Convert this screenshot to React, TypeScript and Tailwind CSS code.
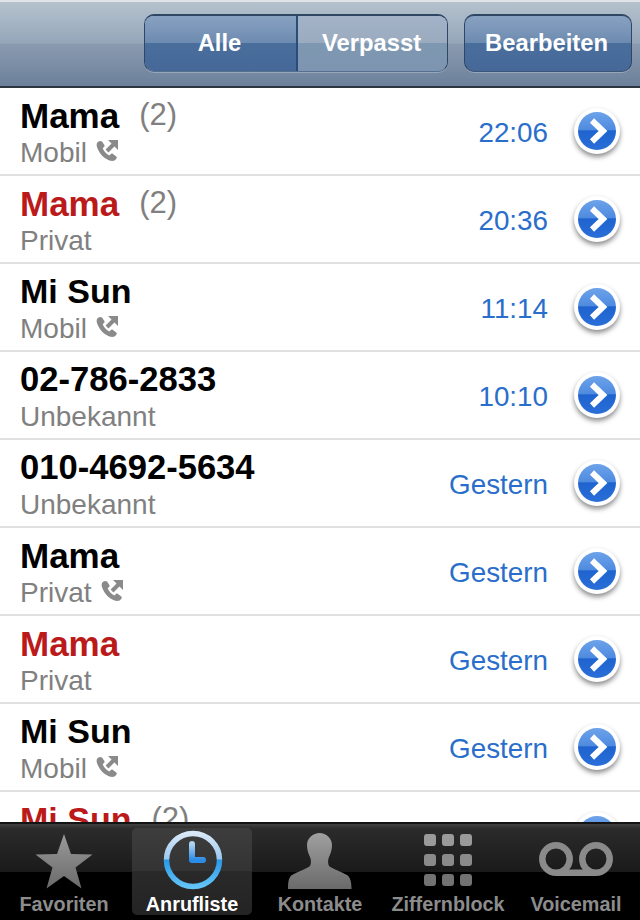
import React from "react";

type Row = { name: string; count?: string; missed?: boolean; sub: string; phone?: boolean; time: string };

const rows: Row[] = [
  { name: "Mama", count: "(2)", sub: "Mobil", phone: true, time: "22:06" },
  { name: "Mama", count: "(2)", missed: true, sub: "Privat", time: "20:36" },
  { name: "Mi Sun", sub: "Mobil", phone: true, time: "11:14" },
  { name: "02-786-2833", sub: "Unbekannt", time: "10:10" },
  { name: "010-4692-5634", sub: "Unbekannt", time: "Gestern" },
  { name: "Mama", sub: "Privat", phone: true, time: "Gestern" },
  { name: "Mama", missed: true, sub: "Privat", time: "Gestern" },
  { name: "Mi Sun", sub: "Mobil", phone: true, time: "Gestern" },
  { name: "Mi Sun", count: "(2)", missed: true, sub: "Mobil", time: "Gestern" },
];

function OutgoingIcon() {
  return (
    <svg width="24" height="24" viewBox="0 0 24 24" className="ml-[8px] mt-[-4px]">
      <path
        d="M3.5 2.5 C1.5 3.5 1 6 2.5 9.5 C4.5 14.5 9 19.5 14.5 21.5 C17.5 22.5 20 22 21.5 19.5 C22 18.5 21.8 17.8 21 17.2 L18 15 C17 14.4 16.3 14.5 15.6 15.3 L14.5 16.5 C11.5 15.2 8.8 12.3 7.7 9.2 L9 8 C9.7 7.3 9.8 6.6 9.2 5.7 L7.2 2.8 C6.2 1.7 5 1.7 3.5 2.5 Z"
        fill="#8a8a8a"
      />
      <path d="M12 12 L19.5 4.5" stroke="#8a8a8a" strokeWidth="4" fill="none" />
      <path d="M13 1 H23 V11 Z" fill="#8a8a8a" />
    </svg>
  );
}

function Disclosure() {
  return (
    <div className="h-[46px] w-[46px] shrink-0 rounded-full bg-white p-[4px] shadow-[0_3px_5px_rgba(0,0,0,0.45)]">
      <div className="flex h-full w-full items-center justify-center rounded-full bg-[linear-gradient(180deg,#6ea3ea_0%,#4f8be0_46%,#1f63cf_50%,#2a6fd8_100%)]">
        <svg width="38" height="38" viewBox="0 0 38 38">
          <path d="M14 8.5 L25 19 L14 29.5" fill="none" stroke="white" strokeWidth="6" />
        </svg>
      </div>
    </div>
  );
}

function nameSize(name: string) {
  if (name === "Mi Sun") return "text-[34px]";
  if (name === "Mama") return "text-[35px]";
  return "text-[34.6px]";
}

function CallRow({ row }: { row: Row }) {
  return (
    <div className="flex h-[88px] shrink-0 items-start border-b-2 border-[#e0e0e0] bg-white pl-5 pr-[20px]">
      <div className="min-w-0 flex-1">
        <div className="flex h-[46px] items-center pt-[8px]">
          <span className={`${nameSize(row.name)} font-bold leading-none ${row.missed ? "text-[#bb1a1a]" : "text-black"}`}>{row.name}</span>
          {row.count && <span className="ml-[20px] mt-[-1px] text-[31px] leading-none text-[#808080]">{row.count}</span>}
        </div>
        <div className="flex h-[34px] items-center pt-[4px] text-[28px] leading-none text-[#808080]">
          <span>{row.sub}</span>
          {row.phone && <OutgoingIcon />}
        </div>
      </div>
      <span className="mt-[28px] mr-[26px] text-[27.8px] leading-[34px] text-[#2a6ecb]">{row.time}</span>
      <div className="mt-[20px]">
        <Disclosure />
      </div>
    </div>
  );
}

function Star() {
  return (
    <svg width="60" height="58" viewBox="0 0 60 58">
      <defs>
        <linearGradient id="star" x1="0" y1="0" x2="0" y2="1">
          <stop offset="0" stopColor="#9a9a9a" />
          <stop offset="1" stopColor="#6a6a6a" />
        </linearGradient>
      </defs>
      <path d="M30 2 L37 22 L58.5 22.5 L41.5 35.5 L47.5 56.5 L30 44 L12.5 56.5 L18.5 35.5 L1.5 22.5 L23 22 Z" fill="url(#star)" />
    </svg>
  );
}

function Clock() {
  return (
    <svg width="60" height="60" viewBox="0 0 60 60">
      <defs>
        <linearGradient id="clockRing" x1="0" y1="0" x2="0" y2="1">
          <stop offset="0" stopColor="#d8e8f7" />
          <stop offset="0.48" stopColor="#9cc8f0" />
          <stop offset="0.5" stopColor="#2a98e8" />
          <stop offset="1" stopColor="#62c4f7" />
        </linearGradient>
        <linearGradient id="clockHand" x1="0" y1="0" x2="0" y2="1">
          <stop offset="0" stopColor="#b0d2f1" />
          <stop offset="1" stopColor="#2a8ce6" />
        </linearGradient>
      </defs>
      <circle cx="30" cy="30" r="26.5" fill="none" stroke="url(#clockRing)" strokeWidth="5.5" />
      <path d="M29 14 V30 H40" fill="none" stroke="url(#clockHand)" strokeWidth="6" strokeLinecap="round" strokeLinejoin="round" />
    </svg>
  );
}

function Person() {
  return (
    <svg width="66" height="58" viewBox="0 0 66 58">
      <defs>
        <linearGradient id="person" x1="0" y1="0" x2="0" y2="1">
          <stop offset="0" stopColor="#a0a0a0" />
          <stop offset="1" stopColor="#6a6a6a" />
        </linearGradient>
      </defs>
      <path
        d="M32.7 1 C26 1 20 6 20 13 C20 18 21.5 22 23 25 C24.5 28 24 32 23 34 C19 37 10 40 5 43 C2 45 1 49 1 57 H64.5 C64.5 49 63 45 60 43 C55 40 46 37 42 34 C41 32 40.5 28 42 25 C43.5 22 45 18 45 13 C45 6 39 1 32.7 1 Z"
        fill="url(#person)"
      />
    </svg>
  );
}

function Keypad() {
  return (
    <svg width="48" height="52" viewBox="0 0 48 52">
      {[0, 20, 40].map((y, r) =>
        [0, 18, 36].map((x) => (
          <rect key={`${r}-${x}`} x={x} y={y} width="12" height="12" rx="3" fill={r === 0 ? "#9a9a9a" : r === 1 ? "#8a8a8a" : "#727272"} />
        ))
      )}
    </svg>
  );
}

function Voicemail() {
  return (
    <svg width="74" height="34" viewBox="0 0 74 34">
      <path
        d="M17 30.7 H57 M17 3.3 A13.7 13.7 0 1 0 17 30.7 A13.7 13.7 0 1 0 17 3.3 Z M57 3.3 A13.7 13.7 0 1 0 57 30.7 A13.7 13.7 0 1 0 57 3.3 Z"
        fill="none"
        stroke="#8a8a8a"
        strokeWidth="6.5"
      />
    </svg>
  );
}

function Tab({ label, active, children }: { label: string; active?: boolean; children: React.ReactNode }) {
  return (
    <div
      className={`flex h-[87px] w-[120px] flex-col items-center rounded-[5px] ${
        active ? "bg-[linear-gradient(180deg,#3d3d3d_0%,#333333_50%,#292929_50%,#242424_100%)]" : ""
      }`}
    >
      <div className="flex h-[64px] w-full items-end justify-center">{children}</div>
      <span className={`mt-[2px] text-[19.8px] font-bold leading-[20px] ${active ? "text-white" : "text-[#8c8c8c]"}`}>{label}</span>
    </div>
  );
}

const buttonFace = "bg-[linear-gradient(180deg,#88a1c1_0%,#6d8bb0_49%,#4a6e9c_50%,#456899_100%)]";

export default function App() {
  return (
    <div className="flex h-[920px] w-[640px] flex-col overflow-hidden bg-white font-['Liberation_Sans',Arial,sans-serif]">
      <header className="flex h-[88px] shrink-0 items-start justify-end border-t-2 border-b-2 border-t-[#dfe3e7] border-b-[#2c3440] bg-[linear-gradient(180deg,#b5c2ce_0%,#95a6b9_49%,#8a9bb0_50%,#6c809b_100%)] pr-2 pt-[12px]">
        <div className="flex h-[58px] w-[304px] overflow-hidden rounded-[10px] border border-t-2 border-[#2f4664] border-b-[#56708f] text-[23.8px] font-bold text-white shadow-[0_1px_0_rgba(255,255,255,0.25)]">
          <div className={`flex w-[153px] items-center justify-center border-r-2 border-[#2a4c78] ${buttonFace} pb-[2px] pr-[2px]`}>Alle</div>
          <div className="flex flex-1 items-center justify-center bg-[linear-gradient(180deg,#a4b3c7_0%,#9aaabf_49%,#7f98b2_50%,#7d95b0_100%)] pb-[2px] pr-[2px]">Verpasst</div>
        </div>
        <div className={`ml-4 flex h-[58px] w-[168px] items-center justify-center rounded-[10px] border border-t-2 border-[#2f4664] border-b-[#3d5677] ${buttonFace} pb-[2px] pr-[3px] text-[23.8px] font-bold text-white shadow-[0_1px_0_rgba(255,255,255,0.25)]`}>
          Bearbeiten
        </div>
      </header>
      <main className="flex min-h-0 flex-1 flex-col overflow-hidden">
        {rows.map((row, i) => (
          <CallRow key={i} row={row} />
        ))}
      </main>
      <nav className="flex h-[98px] shrink-0 items-start gap-2 border-t-2 border-[#141414] bg-[linear-gradient(180deg,#414141_0%,#2b2b2b_5%,#1a1a1a_50%,#000000_50%,#000000_100%)] pl-[4px] pt-[4px]">
        <Tab label="Favoriten"><div className="pb-[2px]"><Star /></div></Tab>
        <Tab label="Anrufliste" active><div className="pb-[2px] pl-[2px]"><Clock /></div></Tab>
        <Tab label="Kontakte"><div className="pb-[2px]"><Person /></div></Tab>
        <Tab label="Ziffernblock"><div className="pb-[6px]"><Keypad /></div></Tab>
        <Tab label="Voicemail"><div className="pb-[16px]"><Voicemail /></div></Tab>
      </nav>
    </div>
  );
}
